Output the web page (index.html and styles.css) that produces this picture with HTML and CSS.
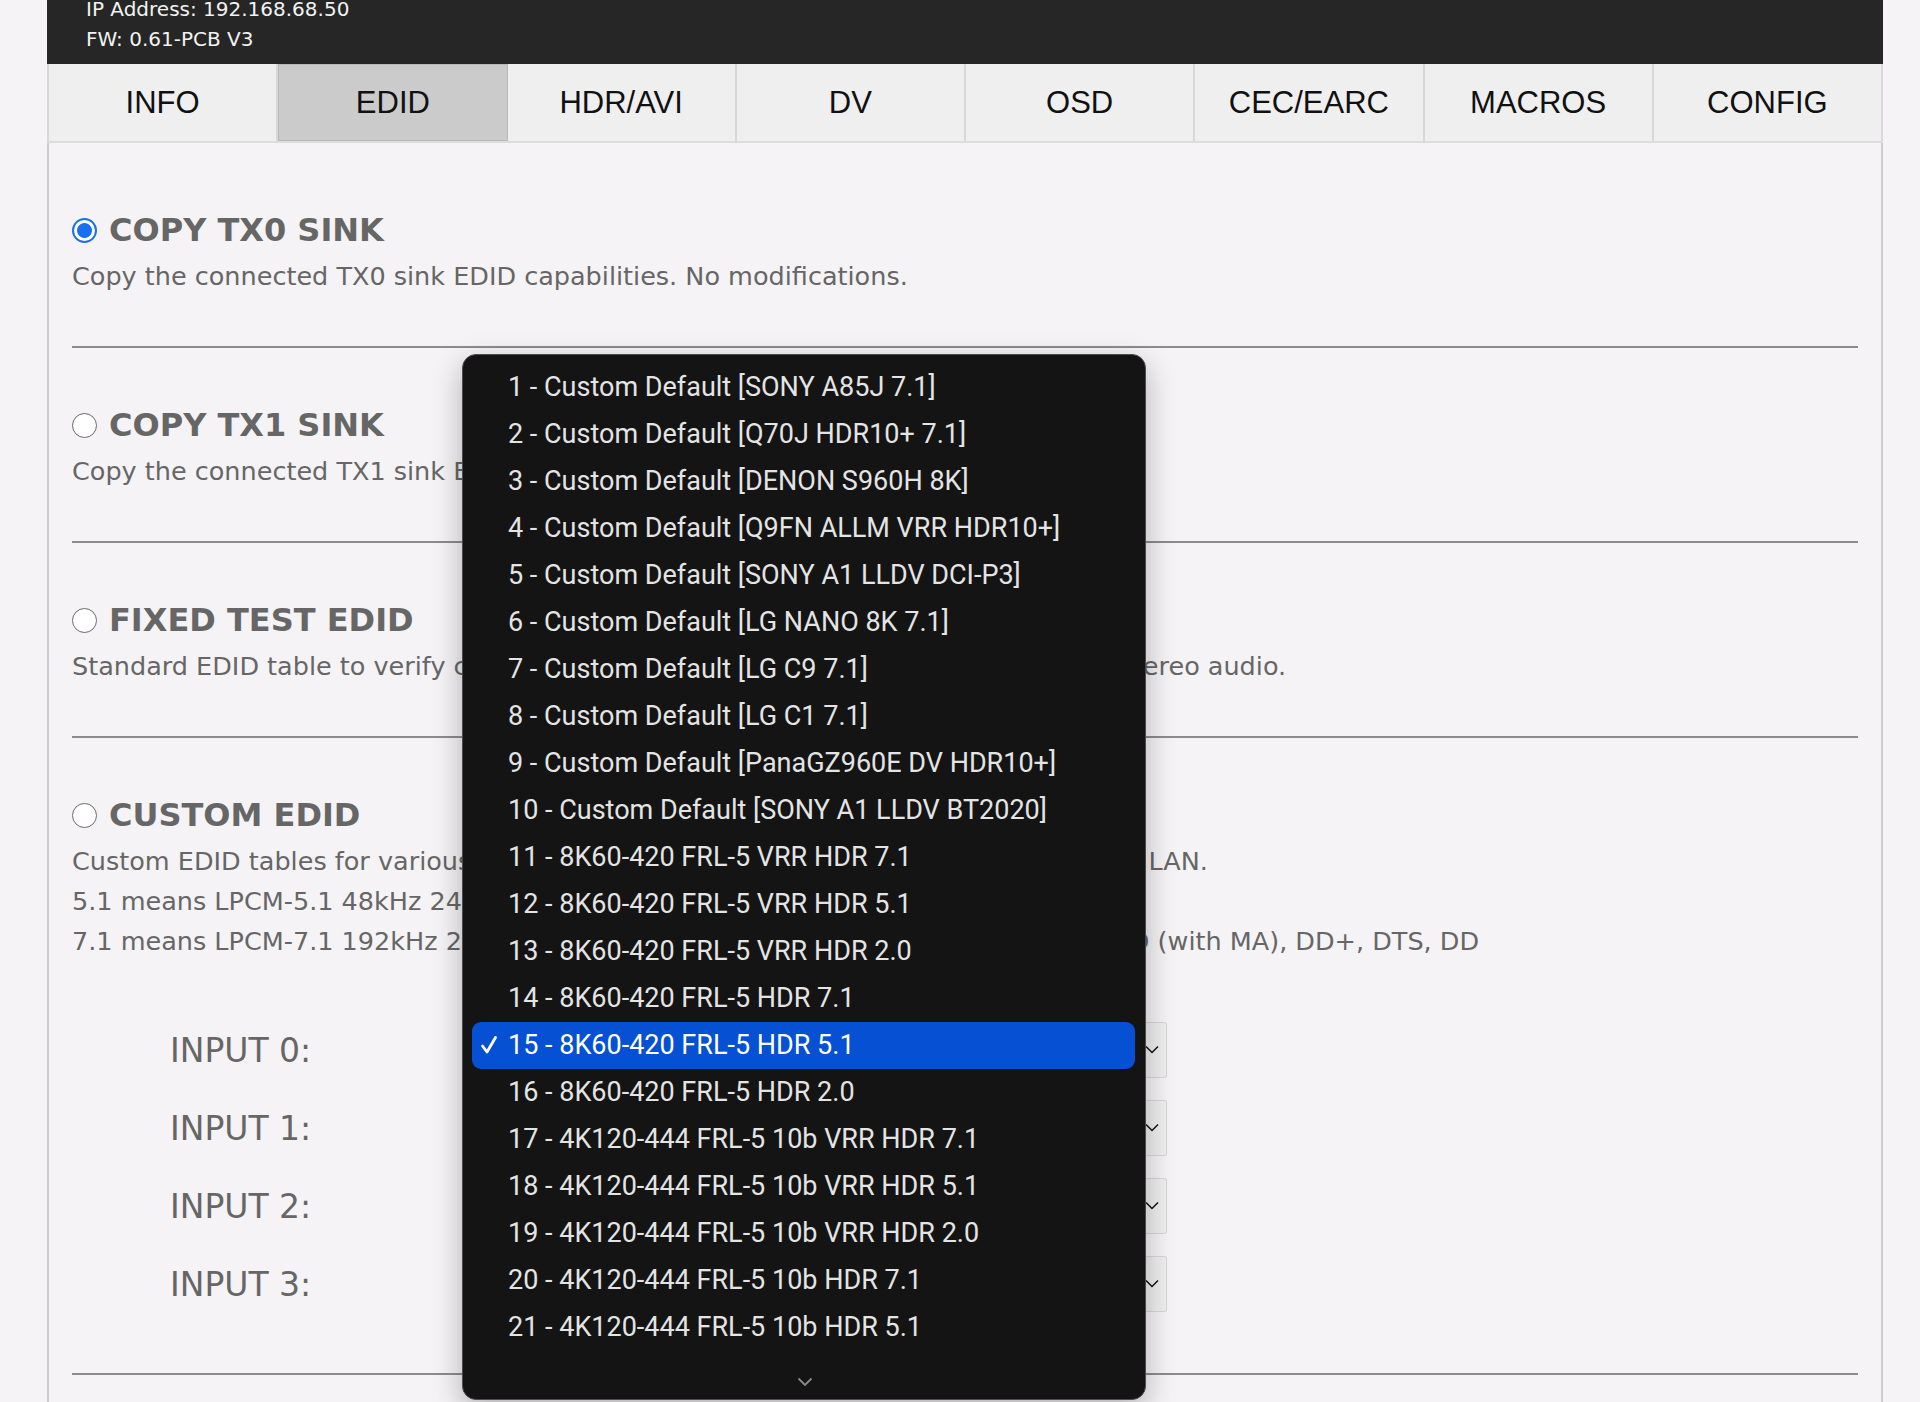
FILE: index.html
```html
<!DOCTYPE html>
<html lang="en">
<head>
    <meta charset="UTF-8">
    <meta name="viewport" content="width=device-width, initial-scale=1.0">
    <title>EDID</title>
    <link rel="stylesheet" href="styles.css">
</head>
<body>
    <div class="container">
        <header class="topbar">
            <p>IP Address: 192.168.68.50</p>
            <p>FW: 0.61-PCB V3</p>
        </header>

        <nav class="tabs">
            <a class="tab">INFO</a>
            <a class="tab active">EDID</a>
            <a class="tab">HDR/AVI</a>
            <a class="tab">DV</a>
            <a class="tab">OSD</a>
            <a class="tab">CEC/EARC</a>
            <a class="tab">MACROS</a>
            <a class="tab">CONFIG</a>
        </nav>

        <main class="content">
            <section class="mode">
                <label class="mode-title"><input type="radio" name="edid-mode" checked>COPY TX0 SINK</label>
                <p class="mode-desc">Copy the connected TX0 sink EDID capabilities. No modifications.</p>
            </section>

            <section class="mode">
                <label class="mode-title"><input type="radio" name="edid-mode">COPY TX1 SINK</label>
                <p class="mode-desc">Copy the connected TX1 sink EDID capabilities. No modifications.</p>
            </section>

            <section class="mode">
                <label class="mode-title"><input type="radio" name="edid-mode">FIXED TEST EDID</label>
                <p class="mode-desc">Standard EDID table to verify connectivity: up to 4K60 RGB 10-bit SDR with LPCM stereo audio.</p>
            </section>

            <section class="mode">
                <label class="mode-title"><input type="radio" name="edid-mode">CUSTOM EDID</label>
                <p class="mode-desc">Custom EDID tables for various TV and AVR models. Tables can be uploaded via the LAN.<br>
                5.1 means LPCM-5.1 48kHz 24bit, plus bitstream audio.<br>
                7.1 means LPCM-7.1 192kHz 24-bit, plus bitstreams: Atmos, TrueHD, DTS:X, DTS-HD (with MA), DD+, DTS, DD</p>

                <div class="inputs">
                    <div class="input-row">
                        <span class="input-label">INPUT 0:</span>
                        <div class="select">
                            <span>15 - 8K60-420 FRL-5 HDR 5.1</span>
                            <svg width="14" height="9" viewBox="0 0 14 9"><polyline points="1,1.5 7,7.5 13,1.5" fill="none" stroke="#111" stroke-width="1.5"/></svg>
                        </div>
                    </div>
                    <div class="input-row">
                        <span class="input-label">INPUT 1:</span>
                        <div class="select">
                            <span>15 - 8K60-420 FRL-5 HDR 5.1</span>
                            <svg width="14" height="9" viewBox="0 0 14 9"><polyline points="1,1.5 7,7.5 13,1.5" fill="none" stroke="#111" stroke-width="1.5"/></svg>
                        </div>
                    </div>
                    <div class="input-row">
                        <span class="input-label">INPUT 2:</span>
                        <div class="select">
                            <span>15 - 8K60-420 FRL-5 HDR 5.1</span>
                            <svg width="14" height="9" viewBox="0 0 14 9"><polyline points="1,1.5 7,7.5 13,1.5" fill="none" stroke="#111" stroke-width="1.5"/></svg>
                        </div>
                    </div>
                    <div class="input-row">
                        <span class="input-label">INPUT 3:</span>
                        <div class="select">
                            <span>15 - 8K60-420 FRL-5 HDR 5.1</span>
                            <svg width="14" height="9" viewBox="0 0 14 9"><polyline points="1,1.5 7,7.5 13,1.5" fill="none" stroke="#111" stroke-width="1.5"/></svg>
                        </div>
                    </div>
                </div>
            </section>
        </main>
    </div>

    <!-- open list of the INPUT 0 select -->
    <ul class="popup">
        <li>1 - Custom Default [SONY A85J 7.1]</li>
        <li>2 - Custom Default [Q70J HDR10+ 7.1]</li>
        <li>3 - Custom Default [DENON S960H 8K]</li>
        <li>4 - Custom Default [Q9FN ALLM VRR HDR10+]</li>
        <li>5 - Custom Default [SONY A1 LLDV DCI-P3]</li>
        <li>6 - Custom Default [LG NANO 8K 7.1]</li>
        <li>7 - Custom Default [LG C9 7.1]</li>
        <li>8 - Custom Default [LG C1 7.1]</li>
        <li>9 - Custom Default [PanaGZ960E DV HDR10+]</li>
        <li>10 - Custom Default [SONY A1 LLDV BT2020]</li>
        <li>11 - 8K60-420 FRL-5 VRR HDR 7.1</li>
        <li>12 - 8K60-420 FRL-5 VRR HDR 5.1</li>
        <li>13 - 8K60-420 FRL-5 VRR HDR 2.0</li>
        <li>14 - 8K60-420 FRL-5 HDR 7.1</li>
        <li class="selected"><svg class="check" width="18" height="20" viewBox="0 0 18 20"><polyline points="2.5,11 7,17 15.5,2.5" fill="none" stroke="#fff" stroke-width="2.8" stroke-linecap="round" stroke-linejoin="round"/></svg>15 - 8K60-420 FRL-5 HDR 5.1</li>
        <li>16 - 8K60-420 FRL-5 HDR 2.0</li>
        <li>17 - 4K120-444 FRL-5 10b VRR HDR 7.1</li>
        <li>18 - 4K120-444 FRL-5 10b VRR HDR 5.1</li>
        <li>19 - 4K120-444 FRL-5 10b VRR HDR 2.0</li>
        <li>20 - 4K120-444 FRL-5 10b HDR 7.1</li>
        <li>21 - 4K120-444 FRL-5 10b HDR 5.1</li>
        <svg class="more" width="16" height="10" viewBox="0 0 16 10"><polyline points="1.5,1.5 8,8 14.5,1.5" fill="none" stroke="#8a8a8a" stroke-width="1.8"/></svg>
    </ul>
</body>
</html>
```

FILE: styles.css
```css
html, body {
    height: 100%;
    overflow: hidden;
}

body {
    margin: 0;
    background-color: #f5f3f6;
    font-family: Verdana, "DejaVu Sans", sans-serif;
    color: #666;
}

.container {
    margin-left: 47px;
    width: 1836px;
}

.topbar {
    margin-top: -6px;
    height: 70px;
    box-sizing: border-box;
    padding-left: 39px;
    background-color: #262626;
    color: #f2f2f2;
    font-size: 20px;
}

.topbar p {
    margin: 0;
    line-height: 30px;
}

.tabs {
    display: grid;
    grid-template-columns: repeat(8, 1fr);
    height: 79px;
    background-color: #efefef;
    border-left: 2px solid #d8d8d8;
    border-bottom: 2px solid #dcdcdc;
    box-sizing: border-box;
}

.tab {
    display: flex;
    align-items: center;
    justify-content: center;
    border-right: 2px solid #d8d8d8;
    font-family: "Liberation Sans", Arial, sans-serif;
    font-size: 31px;
    color: #111;
}

.tab.active {
    background-color: #cbcbcb;
    border: 1px solid #b9b9b9;
}

.content {
    height: 1300px;
    padding: 10px 23px 0;
    border-left: 2px solid #cfcccf;
    border-right: 2px solid #cfcccf;
}

.mode {
    padding: 57px 0 50px;
    border-bottom: 2px solid #8c8c8c;
}

.mode-title {
    display: flex;
    align-items: center;
    height: 40px;
    font-size: 32px;
    font-weight: bold;
    color: #666;
}

.mode-title input {
    appearance: none;
    box-sizing: border-box;
    width: 25px;
    height: 25px;
    margin: 0 12px 0 0;
    border: 1.5px solid #6a6a6a;
    border-radius: 50%;
    background-color: #fff;
}

.mode-title input:checked {
    border: 2px solid #1a6ff0;
    background: radial-gradient(circle, #1a6ff0 0, #1a6ff0 7px, #fff 7.8px);
}

.mode-desc {
    margin: 6px 0 0;
    font-size: 25.5px;
    line-height: 40px;
    color: #666;
}

.inputs {
    margin-top: 50px;
}

.input-row {
    display: flex;
    align-items: center;
    height: 78px;
    padding-left: 98px;
}

.input-label {
    width: 300px;
    font-size: 33px;
    color: #666;
}

.select {
    display: flex;
    align-items: center;
    justify-content: space-between;
    width: 697px;
    height: 56px;
    box-sizing: border-box;
    padding: 0 7px 2px 14px;
    background-color: #efefef;
    border: 1px solid #d6d6d6;
    border-radius: 2px;
    font-size: 20px;
    color: #222;
}

.popup {
    position: absolute;
    left: 462px;
    top: 354px;
    width: 684px;
    height: 1046px;
    box-sizing: border-box;
    margin: 0;
    padding: 9px 10px 0 9px;
    list-style: none;
    background-color: #141414;
    border: 1px solid #4c4c4c;
    border-radius: 14px;
    box-shadow: 0 10px 30px rgba(0, 0, 0, 0.28);
    font-family: Roboto, "Liberation Sans", sans-serif;
    font-size: 27px;
    color: #e4e4e4;
}

.popup li {
    position: relative;
    height: 47px;
    line-height: 47px;
    padding-left: 36px;
    border-radius: 9px;
}

.popup li.selected {
    background-color: #0650d4;
    color: #fff;
}

.check {
    position: absolute;
    left: 8px;
    top: 13px;
}

.more {
    position: absolute;
    left: 334px;
    bottom: 12px;
}
```
